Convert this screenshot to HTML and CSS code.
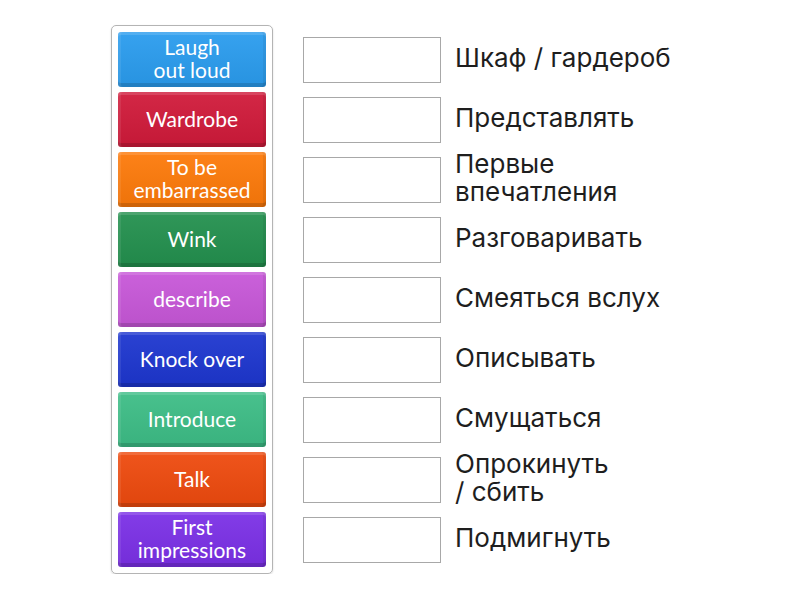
FILE: index.html
```html
<!DOCTYPE html>
<html>
<head>
<meta charset="utf-8">
<link rel="stylesheet" href="styles.css">
</head>
<body>
<div class="page">
  <div class="bank">
    <div class="tile c1">Laugh<br>out loud</div>
    <div class="tile c2">Wardrobe</div>
    <div class="tile c3">To be<br>embarrassed</div>
    <div class="tile c4">Wink</div>
    <div class="tile c5">describe</div>
    <div class="tile c6">Knock over</div>
    <div class="tile c7">Introduce</div>
    <div class="tile c8">Talk</div>
    <div class="tile c9">First<br>impressions</div>
  </div>
  <div class="targets">
    <div class="row"><div class="slot"></div><div class="label">Шкаф / гардероб</div></div>
    <div class="row"><div class="slot"></div><div class="label">Представлять</div></div>
    <div class="row"><div class="slot"></div><div class="label">Первые<br>впечатления</div></div>
    <div class="row"><div class="slot"></div><div class="label">Разговаривать</div></div>
    <div class="row"><div class="slot"></div><div class="label">Смеяться вслух</div></div>
    <div class="row"><div class="slot"></div><div class="label">Описывать</div></div>
    <div class="row"><div class="slot"></div><div class="label">Смущаться</div></div>
    <div class="row"><div class="slot"></div><div class="label">Опрокинуть<br>/ сбить</div></div>
    <div class="row"><div class="slot"></div><div class="label">Подмигнуть</div></div>
  </div>
</div>
</body>
</html>
```
FILE: styles.css
```css
html, body {
  margin: 0;
  padding: 0;
  background: #fff;
}
.page {
  display: flex;
  align-items: flex-start;
  padding: 25px 0 0 111px;
}
.bank {
  display: flex;
  flex-direction: column;
  gap: 5px;
  padding: 6px;
  border: 1px solid #b4b4b4;
  border-radius: 5px;
  box-shadow: 0 1px 2px rgba(0,0,0,0.15);
}
.tile {
  width: 148px;
  height: 55px;
  box-sizing: border-box;
  padding-bottom: 3px;
  border-radius: 3px;
  display: flex;
  align-items: center;
  justify-content: center;
  text-align: center;
  color: #fff;
  font-family: "Lato", "Open Sans", sans-serif;
  font-size: 21px;
  line-height: 23px;
  box-shadow: inset 0 3px 0 rgba(255,255,255,0.14), inset 3px 0 0 rgba(255,255,255,0.08), inset -3px 0 0 rgba(0,0,0,0.06), inset 0 -4px 0 rgba(0,0,0,0.14);
  background-image: linear-gradient(to bottom, rgba(255,255,255,0.06), rgba(0,0,0,0.06));
}
.c1 { background-color: #2a9cee; }
.c2 { background-color: #d01a3a; }
.c3 { background-color: #fd7a0a; }
.c4 { background-color: #23904e; }
.c5 { background-color: #c757d8; }
.c6 { background-color: #1d36cf; }
.c7 { background-color: #3dbd86; }
.c8 { background-color: #ee4a0e; }
.c9 { background-color: #7b30e6; }
.targets {
  display: flex;
  flex-direction: column;
  gap: 14px;
  padding-top: 12px;
  margin-left: 30px;
}
.row {
  display: flex;
  align-items: center;
  height: 46px;
}
.slot {
  width: 138px;
  height: 46px;
  box-sizing: border-box;
  border: 1px solid #a8a8a8;
  background: #fff;
  flex: none;
}
.label {
  margin-left: 14px;
  padding-bottom: 5px;
  font-family: "Inter", "Roboto", sans-serif;
  font-size: 26px;
  line-height: 28px;
  color: #1e1e1e;
  white-space: nowrap;
}
```
